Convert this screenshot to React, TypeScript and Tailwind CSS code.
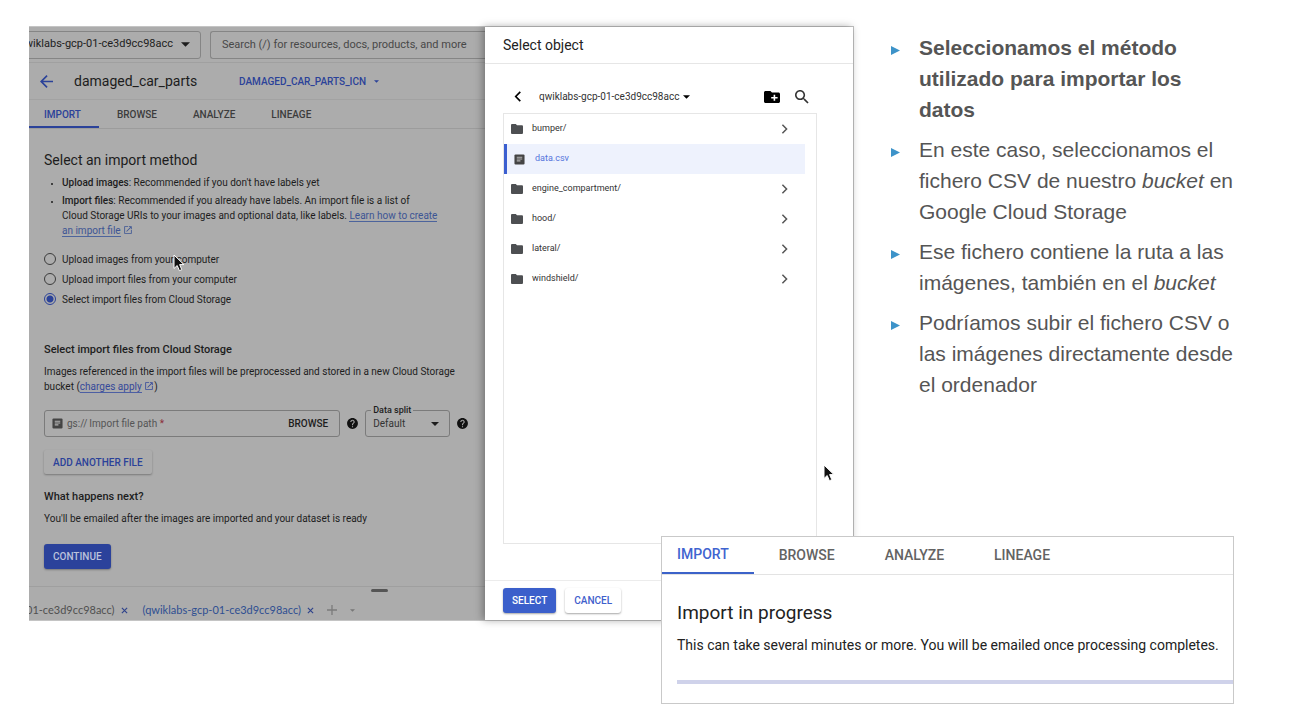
import React from "react";

const ROBOTO = "font-['Roboto','Liberation_Sans',sans-serif]";

function Caret({ className }: { className: string }) {
  return (
    <svg viewBox="0 0 10 5" className={className} fill="currentColor" aria-hidden="true">
      <path d="M0 0h10L5 5z" />
    </svg>
  );
}

function Pointer({ className }: { className: string }) {
  return (
    <svg viewBox="0 0 12 18" className={className} aria-hidden="true">
      <path
        d="M1 1v13.5l3.2-3 2.2 5.2 2.4-1-2.2-5.1h4.3z"
        fill="#111"
        stroke="#fff"
        strokeWidth="1"
        strokeLinejoin="round"
      />
    </svg>
  );
}

function ExternalIcon() {
  return (
    <svg viewBox="0 0 24 24" className="inline-block size-[10px] align-[-1px]" fill="currentColor" aria-hidden="true">
      <path d="M19 19H5V5h7V3H3v18h18v-9h-2v7zM14 3v2h3.6l-9.8 9.8 1.4 1.4L19 6.400V10h2V3h-7z" />
    </svg>
  );
}

function HelpIcon() {
  return (
    <svg viewBox="0 0 24 24" className="size-[13px] shrink-0 text-[#111]" fill="currentColor" aria-hidden="true">
      <path d="M12 2C6.480 2 2 6.480 2 12s4.480 10 10 10 10-4.480 10-10S17.520 2 12 2zm1 17h-2v-2h2v2zm2.070-7.750l-.9.920C13.450 12.900 13 13.500 13 15h-2v-.5c0-1.100.450-2.100 1.170-2.830l1.240-1.260c.370-.360.590-.860.590-1.410 0-1.100-.9-2-2-2s-2 .9-2 2H8c0-2.210 1.790-4 4-4s4 1.790 4 4c0 .880-.360 1.680-.930 2.250z" />
    </svg>
  );
}

function FileIcon({ className }: { className: string }) {
  return (
    <svg viewBox="0 0 12 12" className={className} aria-hidden="true">
      <rect x="0.500" y="0.500" width="11" height="11" rx="1.200" fill="currentColor" />
      <path d="M3 3.500h6M3 5.500h6M3 7.500h4" stroke="#fff" strokeOpacity="0.6" strokeWidth="1.100" />
    </svg>
  );
}

function FolderIcon() {
  return (
    <svg viewBox="2 4 20 16" className="h-[10px] w-[12px] shrink-0" preserveAspectRatio="none" fill="#4d4f52" aria-hidden="true">
      <path d="M10 4H4c-1.100 0-2 .9-2 2v12c0 1.100.9 2 2 2h16c1.100 0 2-.9 2-2V8c0-1.100-.9-2-2-2h-8l-2-2z" />
    </svg>
  );
}

const tabs = ["IMPORT", "BROWSE", "ANALYZE", "LINEAGE"];
const objects = ["bumper/", "data.csv", "engine_compartment/", "hood/", "lateral/", "windshield/"];
const methods = [
  "Upload images from your computer",
  "Upload import files from your computer",
  "Select import files from Cloud Storage",
];

function ImportPage() {
  const [method, setMethod] = React.useState(2);
  return (
    <section className="flex min-w-0 flex-col overflow-hidden bg-[#acacac] text-[#1d1d1d]">
      <div className="flex h-9 items-center gap-[9px] border-b border-[#a0a0a0]">
        <button className="-ml-[15px] flex h-7 w-[187px] shrink-0 items-center justify-end gap-2 rounded-[3px] border border-[#858585] pr-[10px] text-[11px] whitespace-nowrap">
          qwiklabs-gcp-01-ce3d9cc98acc
          <Caret className="h-[5px] w-[9px]" />
        </button>
        <input
          aria-label="Search"
          placeholder="Search (/) for resources, docs, products, and more"
          className="h-7 min-w-0 flex-1 rounded-l-[3px] border border-r-0 border-[#858585] bg-transparent pl-[11px] text-[11px] placeholder:text-[#484848]"
        />
      </div>
      <div className="flex h-[37px] items-center border-b border-[#a2a2a2] pl-[11px]">
        <a href="#back" aria-label="Back" className="text-[#2b4299]">
          <svg viewBox="4 4 16 16" className="size-[13px]" fill="currentColor" aria-hidden="true">
            <path d="M20 11H7.830l5.590-5.590L12 4l-8 8 8 8 1.410-1.410L7.830 13H20v-2z" />
          </svg>
        </a>
        <h1 className="ml-[21px] w-[165px] text-[14px] leading-5">damaged_car_parts</h1>
        <button className="flex items-center gap-2 text-[10px] font-medium text-[#2b4299]">
          DAMAGED_CAR_PARTS_ICN
          <Caret className="h-[3px] w-[5px]" />
        </button>
      </div>
      <nav className="flex h-[29px] items-stretch border-b border-[#9c9c9c] text-[10px] font-medium text-[#3c3c3c]">
        {tabs.map((t, i) => (
          <button
            key={t}
            className={
              i === 0
                ? "border-b-2 border-[#2b4299] pt-[2px] pr-[18px] pl-[15px] text-[#2b4299]"
                : "px-[18px]"
            }
          >
            {t}
          </button>
        ))}
      </nav>
      <div className="pr-4 pl-[15px] text-[10px] leading-[15px] whitespace-nowrap">
        <h2 className="mt-[21px] text-[14px] leading-5">Select an import method</h2>
        <ul className="mt-[5px] flex list-disc flex-col gap-[3px] pl-[18px] marker:text-[7px]">
          <li>
            <strong className="font-medium">Upload images</strong>: Recommended if you don't have labels yet
          </li>
          <li>
            <strong className="font-medium">Import files</strong>: Recommended if you already have labels. An import file is a list of
            <br />
            Cloud Storage URIs to your images and optional data, like labels.{" "}
            <a href="#learn" className="text-[#3d5594]">
              <span className="border-b border-[#4d649c]">Learn how to create</span>
              <br />
              <span className="border-b border-[#4d649c]">an import file</span> <ExternalIcon />
            </a>
          </li>
        </ul>
        <fieldset className="mt-[11px]">
          {methods.map((m, i) => (
            <label key={m} className="flex h-5 items-center gap-[6px]">
              <input
                type="radio"
                name="method"
                checked={method === i}
                onChange={() => setMethod(i)}
                className="size-3 appearance-none rounded-full border border-[#3c3c3c] checked:border-[#2b4299] checked:bg-[radial-gradient(circle,#2b4299_3px,transparent_4px)]"
              />
              {m}
            </label>
          ))}
        </fieldset>
        <h3 className="mt-[31px] text-[11px] leading-5 font-medium">Select import files from Cloud Storage</h3>
        <p className="mt-1">
          Images referenced in the import files will be preprocessed and stored in a new Cloud Storage
          <br />
          bucket (
          <a href="#charges" className="text-[#35499a]">
            <span className="border-b border-[#4d5fa3]">charges apply</span> <ExternalIcon />
          </a>
          )
        </p>
        <div className="mt-4 flex items-center">
          <div className="flex h-[27px] w-[297px] items-center rounded-[3px] border border-[#7b7b7b] px-[7px]">
            <FileIcon className="size-[11px] text-[#444]" />
            <label className="ml-1 flex flex-1 items-center gap-[2px] text-[#555]">
              <span>gs://</span>
              <span className="relative flex flex-1 items-center">
                <input required aria-label="Import file path" className="peer w-full bg-transparent" />
                <span className="pointer-events-none absolute left-0 peer-valid:hidden">
                  Import file path <span className="text-[#8c2f3b]">*</span>
                </span>
              </span>
            </label>
            <button className="px-1 font-medium">BROWSE</button>
          </div>
          <span className="mr-[6px] ml-[6px]">
            <HelpIcon />
          </span>
          <div className="relative flex h-[27px] w-[85px] items-center rounded-[3px] border border-[#7b7b7b]">
            <label htmlFor="split" className="absolute -top-2 left-[5px] bg-[#acacac] px-[2px] text-[9px] font-medium">
              Data split
            </label>
            <select id="split" className="w-full appearance-none bg-transparent pl-[7px] text-[#333]">
              <option>Default</option>
            </select>
            <Caret className="pointer-events-none absolute right-[10px] h-1 w-[8px]" />
          </div>
          <span className="ml-[6px]">
            <HelpIcon />
          </span>
        </div>
        <button className="mt-[13px] block h-6 rounded-[2px] px-[9px] font-medium text-[#2b4299] shadow-[0_1px_2px_rgba(0,0,0,0.3)]">
          ADD ANOTHER FILE
        </button>
        <h3 className="mt-[13px] text-[11px] leading-5 font-medium">What happens next?</h3>
        <p className="mt-1">You'll be emailed after the images are imported and your dataset is ready</p>
        <button className="mt-[18px] block h-[25px] rounded-[3px] bg-[#2b429b] px-[9px] font-medium text-[#bcc3dc] shadow-[0_1px_2px_rgba(0,0,0,0.3)]">
          CONTINUE
        </button>
      </div>
      <footer className="mt-[17px] flex flex-1 flex-col border-t border-[#9f9f9f] font-['Lato','Roboto',sans-serif] text-[11px] leading-4">
        <span className="mt-[2px] ml-[342px] h-[3px] w-[17px] rounded-full bg-[#555]" />
        <div className="mt-[10px] -ml-[3px] flex items-center text-[#505050]">
          <span>01-ce3d9cc98acc)</span>
          <button aria-label="Close first tab" className="ml-[6px] text-[#2f438b]">
            <svg viewBox="0 0 8 8" className="size-[7px]" stroke="currentColor" strokeWidth="1.300" aria-hidden="true">
              <path d="M1 1l6 6M7 1L1 7" />
            </svg>
          </button>
          <span className="ml-[15px] text-[#2f4f92]">(qwiklabs-gcp-01-ce3d9cc98acc)</span>
          <button aria-label="Close second tab" className="ml-[6px] text-[#2f438b]">
            <svg viewBox="0 0 8 8" className="size-[7px]" stroke="currentColor" strokeWidth="1.300" aria-hidden="true">
              <path d="M1 1l6 6M7 1L1 7" />
            </svg>
          </button>
          <button aria-label="New tab" className="ml-[13px] text-[#7b7b7b]">
            <svg viewBox="0 0 10 10" className="size-[10px]" stroke="currentColor" strokeWidth="1.300" aria-hidden="true">
              <path d="M5 0v10M0 5h10" />
            </svg>
          </button>
          <Caret className="ml-[13px] h-[3px] w-[5px] text-[#777]" />
        </div>
      </footer>
    </section>
  );
}

function SelectObject() {
  return (
    <section className="relative flex min-w-0 flex-col bg-white text-[#333] shadow-[-2px_0_8px_rgba(0,0,0,0.35)]">
      <h2 className="flex h-[37px] items-center border-b border-[#e6e6e6] pl-[18px] text-[14px] text-[#222]">Select object</h2>
      <div className="mt-[16px] flex h-[33px] items-center pr-[44px] pl-[29px]">
        <button aria-label="Back" className="text-black">
          <svg viewBox="0 0 8 12" className="h-[11px] w-2" fill="none" stroke="currentColor" strokeWidth="1.800" aria-hidden="true">
            <path d="M6.500 1L1.500 6l5 5" />
          </svg>
        </button>
        <button className="ml-[17px] flex items-center gap-1 text-[10px]">
          qwiklabs-gcp-01-ce3d9cc98acc
          <Caret className="h-1 w-[7px] text-black" />
        </button>
        <button aria-label="New folder" className="ml-auto">
          <svg viewBox="2 4 20 16" className="h-[12px] w-4" preserveAspectRatio="none" aria-hidden="true">
            <path fill="#000" d="M20 6h-8l-2-2H4c-1.110 0-2 .890-2 2v12c0 1.110.9 2 2 2h16c1.110 0 2-.890 2-2V8c0-1.110-.9-2-2-2zm-1 8h-3v3h-2v-3h-3v-2h3V9h2v3h3v2z" />
          </svg>
        </button>
        <button aria-label="Search objects" className="ml-[15px]">
          <svg viewBox="3 3 18 18" className="size-[14px]" fill="#333" aria-hidden="true">
            <path d="M15.500 14h-.790l-.280-.270C15.410 12.590 16 11.110 16 9.500 16 5.910 13.090 3 9.500 3S3 5.910 3 9.500 5.910 16 9.500 16c1.610 0 3.090-.590 4.230-1.570l.270.280v.790l5 4.990L20.490 19l-4.990-5zm-6 0C7.010 14 5 11.990 5 9.500S7.010 5 9.500 5 14 7.010 14 9.500 11.990 14 9.500 14z" />
          </svg>
        </button>
      </div>
      <ul className="mr-[36px] ml-[18px] h-[431px] border border-[#e6e6e6] pr-[11px] text-[9px]">
        {objects.map((o) =>
          o.endsWith("/") ? (
            <li key={o}>
              <button className="flex h-[30px] w-full items-center gap-[9px] pr-[17px] pl-[7px]">
                <FolderIcon />
                {o}
                <svg viewBox="0 0 8 12" className="ml-auto h-[10px] w-[7px]" fill="none" stroke="#555" strokeWidth="1.800" aria-hidden="true">
                  <path d="M1.500 1l5 5-5 5" />
                </svg>
              </button>
            </li>
          ) : (
            <li key={o}>
              <button className="flex h-[30px] w-full items-center gap-[10px] border-l-[3px] border-[#3b5fd0] bg-[#eef2fd] pl-[7px] text-[#5474dc]">
                <FileIcon className="size-[11px] text-[#444]" />
                {o}
              </button>
            </li>
          ),
        )}
      </ul>
      <div className="mt-9 flex flex-1 items-center gap-[9px] border-t border-[#ececec] py-[7px] pl-[18px] text-[10px] font-medium">
        <button className="h-[25px] rounded-[3px] bg-[#3b5fcb] px-[9px] text-white shadow-[0_1px_2px_rgba(0,0,0,0.35)]">SELECT</button>
        <button className="h-[25px] rounded-[3px] bg-white px-[9px] text-[#3f60cc] shadow-[0_1px_2px_rgba(0,0,0,0.35)]">CANCEL</button>
      </div>
    </section>
  );
}

function ProgressCard() {
  return (
    <section className="absolute top-[510px] left-[632px] w-[573px] border border-[#c9c9c9] bg-white text-[#222]">
      <nav className="flex h-[38px] items-stretch border-b border-[#e3e3e3] text-[14px] font-medium text-[#636363]">
        {tabs.map((t, i) => (
          <button
            key={t}
            className={i === 0 ? "border-b-2 border-[#3b62c9] pr-[25px] pl-[15px] text-[#3f64d0]" : "px-[25px]"}
          >
            {t}
          </button>
        ))}
      </nav>
      <div className="pb-[19px] pl-[15px]">
        <h2 className="pt-[26px] text-[19px] leading-6">Import in progress</h2>
        <p className="mt-[10px] text-[14px] leading-5">
          This can take several minutes or more. You will be emailed once processing completes.
        </p>
        <div role="progressbar" aria-label="Import in progress" className="mt-[25px] h-1 bg-[#cfd2ea]" />
      </div>
    </section>
  );
}

const notes: React.ReactNode[] = [
  <strong>Seleccionamos el método utilizado para importar los datos</strong>,
  <>
    En este caso, seleccionamos el fichero CSV de nuestro <em>bucket</em> en Google Cloud Storage
  </>,
  <>
    Ese fichero contiene la ruta a las imágenes, también en el <em>bucket</em>
  </>,
  <>Podríamos subir el fichero CSV o las imágenes directamente desde el ordenador</>,
];

export default function App() {
  return (
    <main className="grid min-h-screen grid-cols-[825fr_347fr] items-start gap-x-[37px] bg-white pt-[26px] pr-[67px] pb-[18px] pl-[29px]">
      <div className={`relative ${ROBOTO}`}>
        <div className="grid grid-cols-[456fr_368fr] border-t border-r border-b border-[#c4c4c4]">
          <ImportPage />
          <SelectObject />
        </div>
        <Pointer className="absolute top-[228px] left-[144px] h-[18px] w-3" />
        <Pointer className="absolute top-[438px] left-[794px] h-[18px] w-3" />
        <ProgressCard />
      </div>
      <ul className="flex flex-col gap-[9px] pt-[6px] font-['Liberation_Sans',Arial,sans-serif] text-[21px] leading-[31px] text-[#555]">
        {notes.map((n, i) => (
          <li key={i} className="flex gap-[19px]">
            <svg viewBox="0 0 9 9" className="mt-[14px] size-[9px] shrink-0" fill="#3d93c9" aria-hidden="true">
              <path d="M0 0l9 4.500L0 9z" />
            </svg>
            <p>{n}</p>
          </li>
        ))}
      </ul>
    </main>
  );
}
